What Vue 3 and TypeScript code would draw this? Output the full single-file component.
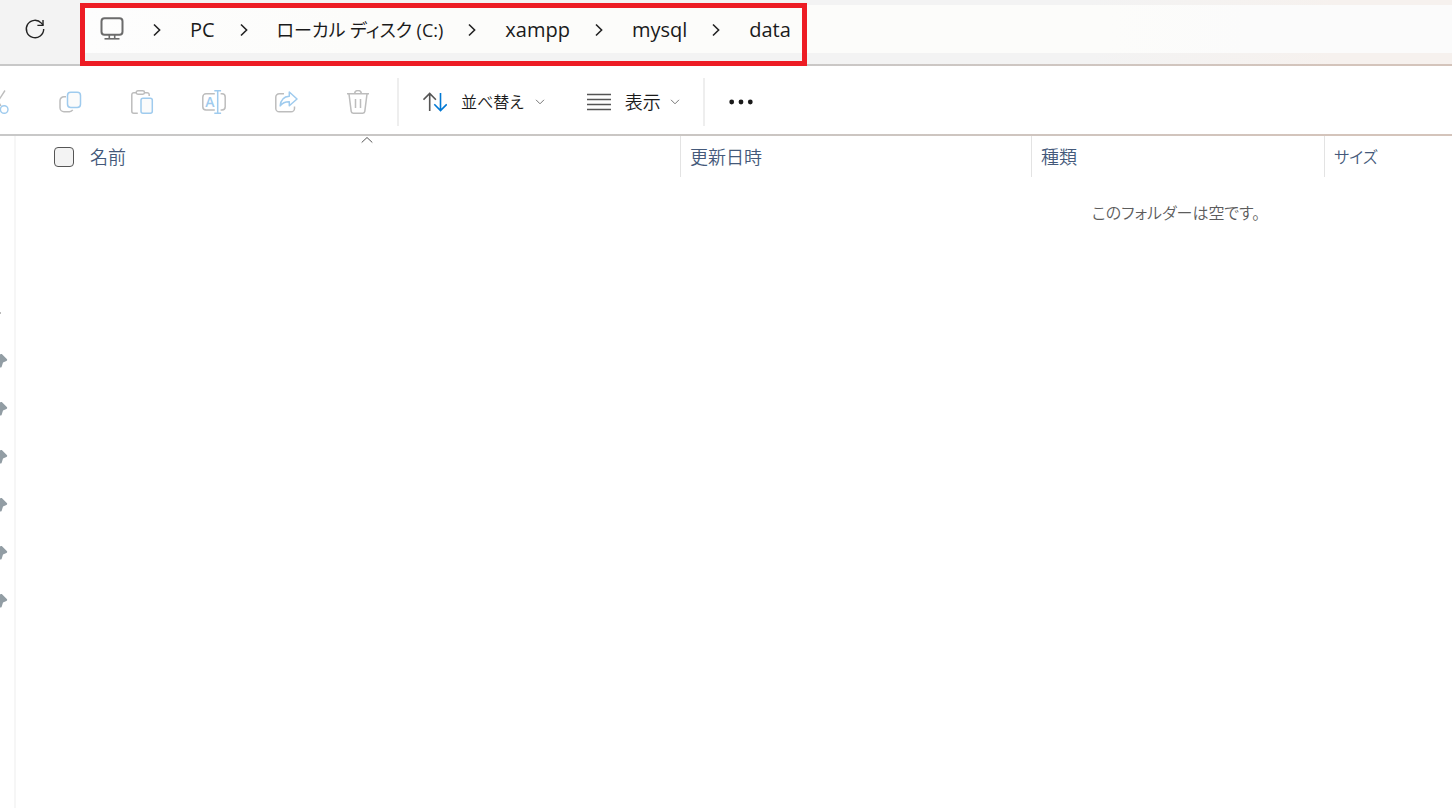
<script setup lang="ts">
import { ref } from 'vue'

interface Label {
  key: string
  label: string
  compact?: boolean
}

const crumbs: Label[] = [
  { key: 'pc', label: 'PC' },
  { key: 'drive', label: 'ローカル ディスク (C:)', compact: true },
  { key: 'xampp', label: 'xampp' },
  { key: 'mysql', label: 'mysql' },
  { key: 'data', label: 'data' },
]
const columns: Label[] = [
  { key: 'modified', label: '更新日時' },
  { key: 'kind', label: '種類' },
  { key: 'size', label: 'サイズ' },
]
const pins: number[] = [1, 2, 3, 4, 5, 6]
const allSelected = ref(false)
</script>

<template>
  <div class="explorer">
    <header class="address-row">
      <button class="refresh" type="button" aria-label="最新の情報に更新">
        <svg width="24" height="24" viewBox="0 0 24 24" fill="none" stroke="#222" stroke-width="1.4">
          <path d="M20.7 12a8.7 8.7 0 1 1-2.3-5.9L20 8.2" />
          <path d="M20 3v5.4h-5.6" />
        </svg>
      </button>
      <nav class="address-bar" aria-label="アドレス">
        <svg class="monitor" width="24" height="26" viewBox="0 0 24 26" fill="none" stroke="#6b6b6b" stroke-width="2">
          <rect x="1.5" y="2.3" width="21" height="16.4" rx="3" />
          <path d="M9.3 19v3.5M14.7 19v3.5" stroke-width="1.6" />
          <path d="M4.5 22.8h15" stroke-width="1.6" />
        </svg>
        <ol class="crumbs">
          <li v-for="crumb in crumbs" :key="crumb.key">
            <svg class="separator" width="8" height="14" viewBox="0 0 8 14" fill="none" stroke="#222" stroke-width="1.6">
              <path d="M1 1.5 6.6 7 1 12.5" />
            </svg>
            <a href="#" :class="{ compact: crumb.compact }">{{ crumb.label }}</a>
          </li>
        </ol>
      </nav>
      <span class="highlight"></span>
    </header>

    <div class="toolbar" role="toolbar">
      <div class="tools">
        <button type="button" aria-label="切り取り">
          <svg width="24" height="24" viewBox="0 0 24 24" fill="none" stroke-width="1.4">
            <path d="M5.5.5 15 16M19 .5 9 16" stroke="#bdbdbd" />
            <circle cx="6" cy="19.5" r="3.8" stroke="#9fcbee" />
            <circle cx="18.2" cy="19.5" r="3.8" stroke="#9fcbee" />
          </svg>
        </button>
        <button type="button" aria-label="コピー">
          <svg width="24" height="24" viewBox="0 0 24 24" fill="none" stroke-width="1.5">
            <path d="M8 6.7H6a4 4 0 0 0-4 4v7a4 4 0 0 0 4 4h5.5a4 4 0 0 0 3.2-1.8" stroke="#bdbdbd" />
            <rect x="9.5" y="2.2" width="13" height="15.2" rx="3.2" fill="#fbfbfb" stroke="#9fcbee" />
          </svg>
        </button>
        <button type="button" aria-label="貼り付け">
          <svg width="24" height="24" viewBox="0 0 24 24" fill="none" stroke-width="1.5">
            <path d="M6 2.7H3.8a2 2 0 0 0-2 2v16.5a2 2 0 0 0 2 2h4M14.5 2.7h2.7a2 2 0 0 1 2 2V6" stroke="#bdbdbd" />
            <rect x="6.2" y=".8" width="8.3" height="3.4" rx="1.7" stroke="#bdbdbd" />
            <rect x="11" y="8.2" width="11.3" height="15" rx="2" fill="#fbfbfb" stroke="#9fcbee" />
          </svg>
        </button>
        <button type="button" aria-label="名前の変更">
          <svg width="24" height="24" viewBox="0 0 24 24" fill="none" stroke-width="1.5">
            <path d="M12.8 3.8H4A3.2 3.2 0 0 0 .8 7v9.8A3.2 3.2 0 0 0 4 20h8.8M18.6 3.8H20A3.2 3.2 0 0 1 23.2 7v9.8A3.2 3.2 0 0 1 20 20h-1.4" stroke="#bdbdbd" />
            <path d="M12.3.8h6.8M12.3 23.2h6.8M15.7.8v22.4" stroke="#9fcbee" />
            <text class="rename-letter" x="8" y="16.5" text-anchor="middle">A</text>
          </svg>
        </button>
        <button type="button" aria-label="共有">
          <svg width="24" height="24" viewBox="0 0 24 24" fill="none" stroke-width="1.5" stroke-linejoin="round">
            <path d="M10 3.7H5.2A3.4 3.4 0 0 0 1.8 7.1v11.3a3.4 3.4 0 0 0 3.4 3.4h11.9a3.4 3.4 0 0 0 3.4-3.4V16.5" stroke="#bdbdbd" />
            <path d="M15.3 2 23 9l-7.7 6.8v-4C11 11.7 8.6 12.7 6.2 15.9 6.7 10 9.8 6.5 15.3 6.2Z" stroke="#9fcbee" />
          </svg>
        </button>
        <button type="button" aria-label="削除">
          <svg width="24" height="24" viewBox="0 0 24 24" fill="none" stroke="#bdbdbd" stroke-width="1.5">
            <path d="M1 3.8h22M8.7 3.6a3.3 3 0 0 1 6.6 0" />
            <path d="m3 4 2.2 17.4a2 2 0 0 0 2 1.8h9.6a2 2 0 0 0 2-1.8L21 4M9.5 9v9M14.5 9v9" />
          </svg>
        </button>
      </div>
      <span class="divider"></span>
      <div class="menus">
        <button type="button" class="menu">
          <svg width="24" height="24" viewBox="0 0 24 24" fill="none" stroke-width="1.6">
            <path d="M6.7 21V3.5M.5 9.7l6.2-6.2 6.2 6.2" stroke="#555" />
            <path d="M17.5 3v17.5M11.3 14.3l6.2 6.2 6.2-6.2" stroke="#0078d4" />
          </svg>
          <span class="compact">並べ替え</span>
          <svg width="10" height="6" viewBox="0 0 10 6" fill="none" stroke="#777"><path d="m1 .8 4 4 4-4" /></svg>
        </button>
        <button type="button" class="menu">
          <svg width="24" height="24" viewBox="0 0 24 24" fill="none" stroke="#555" stroke-width="1.5">
            <path d="M0 4.5h24M0 9.5h24M0 14.5h24M0 19.5h24" />
          </svg>
          <span>表示</span>
          <svg width="10" height="6" viewBox="0 0 10 6" fill="none" stroke="#777"><path d="m1 .8 4 4 4-4" /></svg>
        </button>
      </div>
      <span class="divider"></span>
      <button type="button" class="more" aria-label="もっと見る">
        <svg width="26" height="6" viewBox="0 0 26 6" fill="#1a1a1a">
          <circle cx="3.7" cy="3" r="2.4" /><circle cx="13" cy="3" r="2.4" /><circle cx="22.3" cy="3" r="2.4" />
        </svg>
      </button>
    </div>

    <div class="body">
      <aside class="sidebar">
        <span class="expander"></span>
        <button v-for="pin in pins" :key="pin" type="button" class="pin" aria-label="ピン留め">
          <svg width="16" height="16" viewBox="0 0 16 16" fill="#929da4">
            <path d="M8.5 1h1.3l5 5q1 1.3-.4 2.1L11 9.5l-1.3 4.2q-.8 1.5-1.9.5L5.5 12 2 15H1v-1l3-3.5L1.5 8q-1-1.3.5-2l4.2-1.3Z" />
          </svg>
        </button>
      </aside>
      <main class="files">
        <table>
          <thead>
            <tr>
              <th class="name" scope="col">
                <svg class="sorted" width="12" height="8" viewBox="0 0 12 8" fill="none" stroke="#555"><path d="m.7 6.5 5.3-5 5.3 5" /></svg>
                <label><input v-model="allSelected" type="checkbox" />名前</label>
              </th>
              <th v-for="column in columns" :key="column.key" :class="column.key" scope="col">{{ column.label }}</th>
            </tr>
          </thead>
          <tbody>
            <tr>
              <td class="empty" colspan="4">このフォルダーは空です。</td>
            </tr>
          </tbody>
        </table>
      </main>
    </div>
  </div>
</template>

<style>
body {
  margin: 0;
  background: #fff;
}
</style>

<style scoped>
.explorer {
  display: flex;
  flex-direction: column;
  min-height: 100vh;
  overflow: hidden;
  font-family: "Open Sans", "Noto Sans CJK JP", sans-serif;
  font-feature-settings: "palt";
  font-size: 18px;
  line-height: 24px;
  color: #1a1a1a;
}
* {
  box-sizing: border-box;
}
button {
  display: flex;
  align-items: center;
  justify-content: center;
  padding: 0;
  border: 0;
  background: none;
  font: inherit;
  font-feature-settings: inherit;
  color: inherit;
}
svg {
  display: block;
  flex: none;
}
.address-row {
  position: relative;
  display: flex;
  height: 66px;
  padding-top: 5px;
  background: linear-gradient(90deg, #f3f3f3 75%, #f6f1ee 92%);
  border-bottom: 2px solid;
  border-image: linear-gradient(90deg, #c8c8c8 50%, #d4c4bb 92%) 1;
}
.refresh {
  flex: none;
  width: 60px;
  height: 48px;
  padding-left: 10px;
  margin-right: 20px;
}
.address-bar {
  flex: 1;
  display: flex;
  align-items: center;
  height: 48px;
  padding-left: 20px;
  background: linear-gradient(90deg, #fdfdfd, #fcfcfa 20%, #fcfcfa 75%, #fbfbfb 85%);
}
.monitor {
  margin-right: 29px;
}
.crumbs {
  display: flex;
  gap: 25px;
  margin: 0;
  padding: 2px 0 0;
  list-style: none;
}
.crumbs li {
  display: flex;
  align-items: center;
  gap: 29px;
}
.crumbs a {
  color: inherit;
  font-size: 20px;
  line-height: 28px;
  text-decoration: none;
  white-space: nowrap;
}
.crumbs .compact {
  font-size: 18px;
}
.highlight {
  position: absolute;
  top: 3px;
  left: 80px;
  width: 727px;
  height: 63px;
  border: 5px solid #ed1c24;
  pointer-events: none;
}
.toolbar {
  display: flex;
  align-items: center;
  height: 70px;
  padding-top: 4px;
  border-bottom: 2px solid;
  border-image: linear-gradient(90deg, #c8c8c8, #cac6c3 50%, #d4c4bb 92%) 1;
}
.tools {
  display: flex;
  gap: 24px;
  margin-left: -26px;
  margin-right: 15px;
}
.tools button {
  width: 48px;
  height: 48px;
}
.rename-letter {
  fill: #9fcbee;
  font-family: "Open Sans", sans-serif;
  font-size: 14px;
  font-weight: 600;
}
.divider {
  width: 2px;
  height: 48px;
  background: #eee;
}
.menus {
  display: flex;
  gap: 42px;
  padding: 0 23px 0 24px;
}
.menu {
  height: 48px;
  font-weight: 350;
}
.menu span {
  margin: 0 9px 0 14px;
}
.menu .compact {
  margin-right: 11px;
  font-size: 16px;
}
.more {
  width: 72px;
  height: 48px;
}
.body {
  flex: 1;
  display: flex;
}
.sidebar {
  flex: none;
  width: 16px;
  padding-top: 176px;
  border-right: 2px solid #f6f6f6;
  overflow: hidden;
}
.expander {
  display: block;
  width: 1px;
  height: 2px;
  margin-bottom: 23px;
  background: #bbb;
}
.pin {
  width: 16px;
  height: 48px;
  margin-left: -8px;
}
.files {
  flex: 1;
  min-width: 0;
}
table {
  width: 100%;
  border-collapse: separate;
  border-spacing: 0;
  table-layout: fixed;
}
th {
  position: relative;
  height: 41px;
  padding: 0 0 0 9px;
  border-left: 1px solid #e3e3e3;
  color: #44597a;
  font-size: 18px;
  font-weight: 350;
  text-align: left;
}
.name {
  width: 664px;
  padding-left: 38px;
  border-left: 0;
}
.modified {
  width: 351px;
}
.kind {
  width: 293px;
}
.size {
  font-size: 16px;
}
.sorted {
  position: absolute;
  top: 0;
  left: 345px;
}
label {
  display: flex;
  align-items: center;
  gap: 16px;
}
input {
  appearance: none;
  width: 20px;
  height: 20px;
  margin: 0;
  border: 1px solid #555;
  border-radius: 4px;
  background: #f3f3f3;
}
.empty {
  padding: 24px 0 0 884px;
  color: #5c5c5c;
  font-size: 16px;
  font-weight: 350;
  text-align: center;
  white-space: nowrap;
}
</style>
